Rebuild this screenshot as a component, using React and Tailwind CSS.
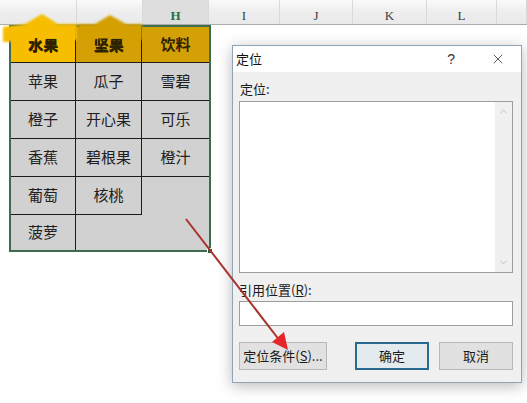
import React from "react";
import { X, ChevronUp, ChevronDown } from "lucide-react";

const cjk = { fontFamily: '"Noto Sans CJK SC", "Noto Sans", sans-serif' };
const serif = { fontFamily: '"Liberation Serif", "DejaVu Serif", serif' };

const columns = [
  { key: "F", w: "w-[77px]", label: "" },
  { key: "G", w: "w-[66px]", label: "" },
  { key: "H", w: "w-[66px]", label: "H", active: true },
  { key: "I", w: "w-[71px]", label: "I" },
  { key: "J", w: "w-[73px]", label: "J" },
  { key: "K", w: "w-[74px]", label: "K" },
  { key: "L", w: "w-[70px]", label: "L" },
  { key: "M", w: "w-[30px]", label: "" },
];

// each cell: text, background, which inner borders it draws
const rows = [
  [
    { t: "水果", bg: "bg-[#f7bd00]", r: true, b: true, head: true },
    { t: "坚果", bg: "bg-[#d3a006]", r: true, b: true, head: true },
    { t: "饮料", bg: "bg-[#d3a006]", b: true, head: true },
  ],
  [
    { t: "苹果", r: true, b: true },
    { t: "瓜子", r: true, b: true },
    { t: "雪碧", b: true },
  ],
  [
    { t: "橙子", r: true, b: true },
    { t: "开心果", r: true, b: true },
    { t: "可乐", b: true },
  ],
  [
    { t: "香蕉", r: true, b: true },
    { t: "碧根果", r: true, b: true },
    { t: "橙汁", b: true },
  ],
  [
    { t: "葡萄", r: true, b: true },
    { t: "核桃", r: true, b: true },
    { t: "" },
  ],
  [{ t: "菠萝", r: true }, { t: "" }, { t: "" }],
];

function Cell({ c, h }) {
  return (
    <div
      className={`flex items-center justify-center ${h} ${c.bg || "bg-[#d1d1d1]"} ${
        c.r ? "border-r border-r-[#1c1c1c]" : ""
      } ${c.b ? "border-b border-b-[#1c1c1c]" : ""} ${
        c.head ? "font-bold text-[#2e2200]" : "text-[#202020]"
      } text-[15px]`}
      style={cjk}
    >
      {c.t}
    </div>
  );
}

function Sheet() {
  return (
    <div className="relative">
      {/* column header strip */}
      <div className="flex h-[25px] bg-gradient-to-b from-[#fafafa] via-[#eeeeee] to-[#e9e9e9] border-b border-[#a9aea9]">
        {columns.map((c) => (
          <div
            key={c.key}
            className={`${c.w} shrink-0 flex items-center justify-center border-r border-[#d9d9d9] text-[13px] pt-[8px] ${
              c.active ? "text-[#217346] font-bold bg-[#dedede]" : "text-[#3c3c3c]"
            }`}
            style={serif}
          >
            {c.label}
          </div>
        ))}
      </div>

      {/* table block */}
      <div className="flex">
        <div className="w-[9px] shrink-0" />
        <div className="relative w-[202px] border-2 border-[#3e6a4d]">
          <div className="grid grid-cols-[65px_66px_67px]">
            {rows.map((row, i) =>
              row.map((c, j) => (
                <Cell
                  key={`${i}-${j}`}
                  c={c}
                  h={i === 0 ? "h-[36px]" : i === 5 ? "h-[35px]" : "h-[38px]"}
                />
              ))
            )}
          </div>
          {/* fill handle */}
          <div className="absolute right-[-4px] bottom-[-4px] w-[6px] h-[6px] bg-[#2f5e3f] border border-white" />
        </div>
      </div>

      {/* tab tips rising from the header cells into the column strip */}
      <svg
        className="absolute left-0 top-0 pointer-events-none"
        width="160"
        height="70"
        viewBox="0 0 160 70"
      >
        <defs>
          <filter id="soft" x="-10%" y="-10%" width="120%" height="120%">
            <feGaussianBlur stdDeviation="1.2" />
          </filter>
        </defs>
        <polygon
          points="3,27 25,24 42,14 58,24 77,24 77,40 11,40 11,42 3,42"
          fill="#f7bd00"
          filter="url(#soft)"
        />
        <polygon
          points="78,24 95,24 110,15 126,24 142,24 142,40 78,40"
          fill="#d3a006"
          filter="url(#soft)"
        />
      </svg>
      <div className="absolute left-[11px] top-[27px] w-[198px] h-[36px] grid grid-cols-[65px_66px_67px] pointer-events-none">
        <div className="flex items-center justify-center font-bold text-[15px] text-[#2e2200]" style={cjk}>水果</div>
        <div className="flex items-center justify-center font-bold text-[15px] text-[#2e2200]" style={cjk}>坚果</div>
        <div />
      </div>
    </div>
  );
}

function Button({ children, primary, w }) {
  return (
    <div
      className={`${w} h-[28px] flex items-center justify-center text-[13px] text-[#1a1a1a] ${
        primary
          ? "border-2 border-[#2a6a90] bg-[#e3ebef]"
          : "border border-[#b8b8b8] bg-[#e1e1e1]"
      }`}
      style={cjk}
    >
      {children}
    </div>
  );
}

function Dialog() {
  return (
    <div className="absolute left-[232px] top-[45px] w-[290px] h-[338px] border border-[#8fa3b9] bg-[#f1f0f1] shadow-[0_3px_14px_rgba(0,0,0,0.28)] flex flex-col">
      <div className="h-[26px] bg-white flex items-center pl-[3px] pr-[15px] text-[13px] text-[#111]" style={cjk}>
        <span>定位</span>
        <span className="ml-auto mr-[35px] text-[14px] text-[#333]" style={{ fontFamily: '"Liberation Sans", sans-serif' }}>?</span>
        <X size={16} strokeWidth={1.1} color="#222" />
      </div>
      <div className="flex flex-col pl-[6px] pr-[8px] pt-[9px]">
        <div className="h-[15px] pl-[1px] text-[13px] leading-[15px] text-[#1a1a1a]" style={cjk}>
          定位:
        </div>
        <div className="mt-[5px] h-[172px] border border-[#9d9d9d] bg-white flex justify-end">
          <div className="w-[17px] bg-[#f0f0f0] flex flex-col items-center justify-between py-[4px]">
            <ChevronUp size={11} strokeWidth={1.5} color="#a6a6a6" />
            <ChevronDown size={11} strokeWidth={1.5} color="#a6a6a6" />
          </div>
        </div>
        <div className="mt-[9px] h-[15px] text-[13px] leading-[15px] text-[#1a1a1a]" style={cjk}>
          引用位置(<span className="underline">R</span>):
        </div>
        <div className="mt-[4px] h-[25px] border border-[#9d9d9d] bg-white" />
        <div className="mt-[16px] flex items-center">
          <Button w="w-[88px]">
            定位条件(<span className="underline">S</span>)...
          </Button>
          <div className="ml-[28px]">
            <Button primary w="w-[74px]">确定</Button>
          </div>
          <div className="ml-[10px]">
            <Button w="w-[74px]">取消</Button>
          </div>
        </div>
      </div>
    </div>
  );
}

export default function App() {
  return (
    <div className="relative w-[527px] h-[403px] overflow-hidden bg-white">
      <Sheet />
      <Dialog />
      {/* pointer arrow from the selection to the button */}
      <svg className="absolute left-0 top-0 pointer-events-none" width="527" height="403" viewBox="0 0 527 403">
        <line x1="186" y1="219" x2="280" y2="341" stroke="#a8322e" strokeWidth="2" />
        <polygon points="288,350 272,342 284,332" fill="#e5262a" />
      </svg>
    </div>
  );
}
